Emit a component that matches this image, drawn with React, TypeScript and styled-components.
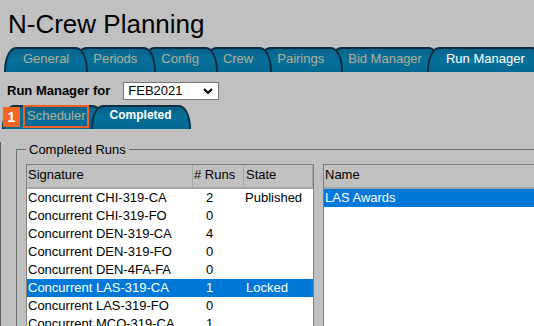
import { createGlobalStyle } from 'styled-components';
import styled from 'styled-components';

const mainTabs = ['General', 'Periods', 'Config', 'Crew', 'Pairings', 'Bid Manager', 'Run Manager'];

const runs = [
  { signature: 'Concurrent CHI-319-CA', count: 2, state: 'Published' },
  { signature: 'Concurrent CHI-319-FO', count: 0, state: '' },
  { signature: 'Concurrent DEN-319-CA', count: 4, state: '' },
  { signature: 'Concurrent DEN-319-FO', count: 0, state: '' },
  { signature: 'Concurrent DEN-4FA-FA', count: 0, state: '' },
  { signature: 'Concurrent LAS-319-CA', count: 1, state: 'Locked' },
  { signature: 'Concurrent LAS-319-FO', count: 0, state: '' },
  { signature: 'Concurrent MCO-319-CA', count: 1, state: '' },
  { signature: 'Concurrent MCO-319-FO', count: 0, state: '' },
];

const App = () => {
  return (
    <Page>
      <GlobalStyle />
      <Title>N-Crew Planning</Title>
      <TabBar>
        {mainTabs.map((name, i) => (
          <Tab key={name} $z={mainTabs.length - i} $active={name === 'Run Manager'}>
            {name}
          </Tab>
        ))}
      </TabBar>
      <ForRow>
        <ForLabel>Run Manager for</ForLabel>
        <Select>
          <span>FEB2021</span>
          <svg width="10" height="6" viewBox="0 0 10 6">
            <path d="M1 1 L5 5 L9 1" fill="none" stroke="#000" strokeWidth="2" />
          </svg>
        </Select>
      </ForRow>
      <SubTabBar>
        <SubTab $z={2}>Scheduler</SubTab>
        <SubTab $z={5} $active>
          Completed
        </SubTab>
        <Badge>1</Badge>
        <Highlight />
      </SubTabBar>
      <Panel>
        <Fieldset>
          <Legend>Completed Runs</Legend>
          <Lists>
            <RunList>
              <RunGrid>
                <HeadCell>Signature</HeadCell>
                <HeadCell>&#35; Runs</HeadCell>
                <HeadCell $pad={2}>State</HeadCell>
              </RunGrid>
              {runs.map((r) => (
                <RunGrid key={r.signature} $selected={r.state === 'Locked'}>
                  <Cell>{r.signature}</Cell>
                  <Cell $pad={13}>{r.count}</Cell>
                  <Cell $pad={r.state === 'Locked' ? 2 : 1}>{r.state}</Cell>
                </RunGrid>
              ))}
            </RunList>
            <NameList>
              <HeadCell>Name</HeadCell>
              <NameRow $selected>LAS Awards</NameRow>
            </NameList>
          </Lists>
        </Fieldset>
      </Panel>
    </Page>
  );
};

export default App;

const GlobalStyle = createGlobalStyle`
  html, body {
    margin: 0;
    background: #c0c0c0;
  }
  body {
    font-family: "Liberation Sans", Arial, sans-serif;
    overflow: hidden;
  }
`;

const Page = styled.div`
  width: 534px;
  height: 326px;
  overflow: hidden;
  background: #c0c0c0;
  color: #000;
`;

const Title = styled.div`
  padding: 9px 0 0 8px;
  font-size: 26px;
  line-height: 30px;
  height: 30px;
`;

const TabBar = styled.div`
  display: flex;
  margin-top: 8px;
  padding-left: 4px;
  height: 25px;
  overflow: hidden;
`;

const Tab = styled.div<{ $active?: boolean; $z: number }>`
  position: relative;
  z-index: ${(p) => (p.$active ? 50 : p.$z)};
  flex-shrink: 0;
  box-sizing: border-box;
  height: 25px;
  padding: 0 17px;
  margin-right: -14px;
  border: 2px solid #0a2e42;
  border-bottom: none;
  border-radius: 12px 12px 0 0 / 24px 24px 0 0;
  background: linear-gradient(#0a6389, #07709a 45%, #006791);
  color: ${(p) => (p.$active ? '#ffffff' : '#b3ad94')};
  font-size: 13px;
  line-height: 19px;
  white-space: nowrap;
`;

const ForRow = styled.div`
  display: flex;
  align-items: center;
  height: 21px;
  margin-top: 8px;
  padding-left: 7px;
`;

const ForLabel = styled.span`
  font-size: 13px;
  font-weight: bold;
`;

const Select = styled.div`
  display: flex;
  align-items: center;
  justify-content: space-between;
  box-sizing: border-box;
  width: 96px;
  height: 18px;
  margin-left: 13px;
  padding: 0 5px 0 4px;
  border: 1px solid #767676;
  background: #fff;
  font-size: 13px;
`;

const SubTabBar = styled.div`
  position: relative;
  display: flex;
  margin-top: 4px;
  padding-left: 2px;
  height: 24px;
`;

const SubTab = styled.div<{ $active?: boolean; $z: number }>`
  position: relative;
  z-index: ${(p) => p.$z};
  flex-shrink: 0;
  box-sizing: border-box;
  height: 24px;
  padding: 0 17px;
  margin-right: -14px;
  border: 2px solid #0a2e42;
  border-bottom: none;
  border-radius: 12px 12px 0 0 / 23px 23px 0 0;
  background: linear-gradient(#0a6389, #07709a 45%, #006791);
  color: ${(p) => (p.$active ? '#ffffff' : '#b3ad94')};
  font-size: ${(p) => (p.$active ? '12px' : '13px')};
  font-weight: ${(p) => (p.$active ? 'bold' : 'normal')};
  line-height: 17px;
  white-space: nowrap;
  &:first-child {
    padding-left: 23px;
  }
`;

const Badge = styled.div`
  position: absolute;
  z-index: 10;
  left: 3px;
  top: 2px;
  width: 17px;
  height: 20px;
  background: #f26522;
  color: #fff;
  font-size: 14px;
  font-weight: bold;
  line-height: 20px;
  text-align: center;
`;

const Highlight = styled.div`
  position: absolute;
  z-index: 10;
  left: 23px;
  top: 0;
  width: 66px;
  height: 23px;
  box-sizing: border-box;
  border: 2px solid #ef5f26;
`;

const Panel = styled.div`
  border-left: 1px solid #5e5e5e;
  height: 200px;
`;

const Fieldset = styled.fieldset`
  margin: 13px -40px 0 15px;
  padding: 7px 0 0 9px;
  border: 1px solid #6e6e6e;
  min-width: 0;
`;

const Legend = styled.legend`
  padding: 0 3px;
  font-size: 13px;
  line-height: 15px;
`;

const Lists = styled.div`
  display: flex;
  gap: 9px;
`;

const RunList = styled.div`
  box-sizing: border-box;
  width: 288px;
  height: 200px;
  border: 1px solid #808080;
  background: #fff;
`;

const NameList = styled.div`
  flex: 1;
  box-sizing: border-box;
  height: 200px;
  border: 1px solid #808080;
  background: #fff;
`;

const RunGrid = styled.div<{ $selected?: boolean }>`
  display: grid;
  grid-template-columns: 166px 51px 1fr;
  background: ${(p) => (p.$selected ? '#0078d7' : 'transparent')};
  color: ${(p) => (p.$selected ? '#fff' : '#000')};
`;

const HeadCell = styled.div<{ $pad?: number }>`
  box-sizing: border-box;
  height: 24px;
  padding-left: ${(p) => p.$pad ?? 1}px;
  border-right: 1px solid #a4a4a4;
  border-bottom: 2px solid #a4a4a4;
  background: #c0c0c0;
  font-size: 13px;
  line-height: 20px;
  white-space: nowrap;
`;

const Cell = styled.div<{ $pad?: number }>`
  height: 18px;
  padding-left: ${(p) => p.$pad ?? 1}px;
  font-size: 13px;
  line-height: 18px;
  white-space: nowrap;
`;

const NameRow = styled.div<{ $selected?: boolean }>`
  height: 18px;
  padding-left: 1px;
  background: ${(p) => (p.$selected ? '#0078d7' : 'transparent')};
  color: ${(p) => (p.$selected ? '#fff' : '#000')};
  font-size: 13px;
  line-height: 18px;
`;
